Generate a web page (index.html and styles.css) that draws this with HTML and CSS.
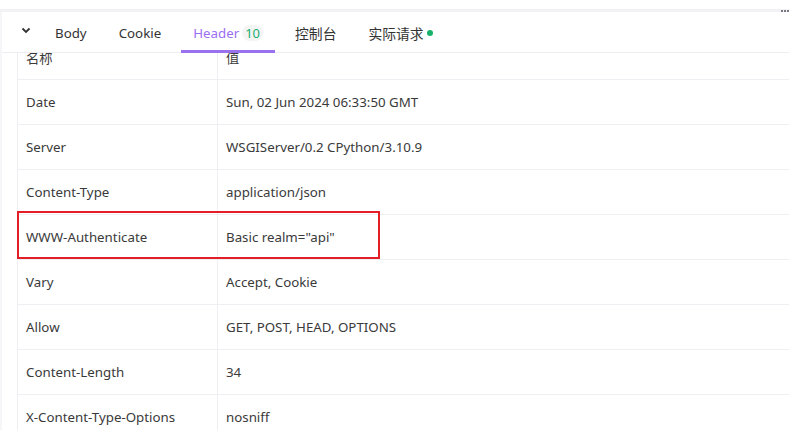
FILE: index.html
```html
<!DOCTYPE html>
<html>
<head>
<meta charset="utf-8">
<link rel="stylesheet" href="styles.css">
</head>
<body>
<div class="topstrip"><span class="grip"><i></i><i></i><i></i></span></div>
<div class="panel">
  <div class="tabs">
    <span class="chev"><svg width="10" height="7" viewBox="0 0 10 7"><path d="M1.5 1.5 L5 5 L8.5 1.5" fill="none" stroke="#333" stroke-width="1.8"/></svg></span>
    <span class="tab">Body</span>
    <span class="tab">Cookie</span>
    <span class="tab active">Header <span class="badge">10</span></span>
    <span class="tab cjk">控制台</span>
    <span class="tab cjk">实际请求<span class="dot"></span></span>
  </div>
  <div class="scroller">
    <table class="grid">
      <tr><td class="k">名称</td><td>值</td></tr>
      <tr><td class="k">Date</td><td>Sun, 02 Jun 2024 06:33:50 GMT</td></tr>
      <tr><td class="k">Server</td><td>WSGIServer/0.2 CPython/3.10.9</td></tr>
      <tr><td class="k">Content-Type</td><td>application/json</td></tr>
      <tr class="hl"><td class="k">WWW-Authenticate</td><td>Basic realm="api"</td></tr>
      <tr><td class="k">Vary</td><td>Accept, Cookie</td></tr>
      <tr><td class="k">Allow</td><td>GET, POST, HEAD, OPTIONS</td></tr>
      <tr><td class="k">Content-Length</td><td>34</td></tr>
      <tr><td class="k">X-Content-Type-Options</td><td>nosniff</td></tr>
      <tr><td class="k">Referrer-Policy</td><td>same-origin</td></tr>
    </table>
    <div class="redbox"></div>
  </div>
</div>
</body>
</html>
```
FILE: styles.css
```css
html, body { margin: 0; padding: 0; background: #fff; }
body { width: 789px; height: 438px; overflow: hidden; font-family: "Noto Sans", "Noto Sans CJK SC", sans-serif; font-size: 13.3px; color: #3a3a3a; }
.topstrip { height: 3px; margin-top: 9px; background: #f2f2f6; display: flex; justify-content: flex-end; align-items: center; }
.grip { display: flex; gap: 1px; }
.grip i { width: 2px; height: 2px; background: #777a80; display: block; }
.panel { border-left: 2px solid #f6f6f9; }
.tabs { height: 41px; display: flex; align-items: center; border-bottom: 1px solid #eeeef2; padding-left: 19px; box-sizing: border-box; }
.chev { width: 10px; display: flex; align-items: center; margin-right: 8px; margin-top: -3px; }
.tab { position: relative; height: 40px; box-sizing: border-box; padding: 2px 16px 0; display: flex; align-items: center; color: #333; }
.tab.cjk { font-size: 13.8px; }
.tab.active { color: #9b6ff2; }
.tab.active::after { content: ""; position: absolute; left: 4px; right: 4px; bottom: -1px; height: 3px; background: #9b72ee; }
.badge { margin-left: 3px; background: #f4f4f5; color: #1aaf6c; border-radius: 8px; padding: 0 3px; line-height: 16px; font-size: 13px; }
.dot { width: 6px; height: 6px; border-radius: 50%; background: #17b26a; margin-left: 3px; }
.scroller { position: relative; height: 377px; overflow: hidden; padding-left: 15px; }
.grid { border-collapse: collapse; width: 800px; margin-top: -19px; table-layout: fixed; }
.grid td { height: 44px; border: 1px solid #eeeff3; padding: 0 0 0 8px; white-space: nowrap; }
.grid td.k { width: 191px; }
.redbox { position: absolute; left: 15px; top: 158px; width: 359px; height: 44px; border: 2px solid #e41e26; }
```
